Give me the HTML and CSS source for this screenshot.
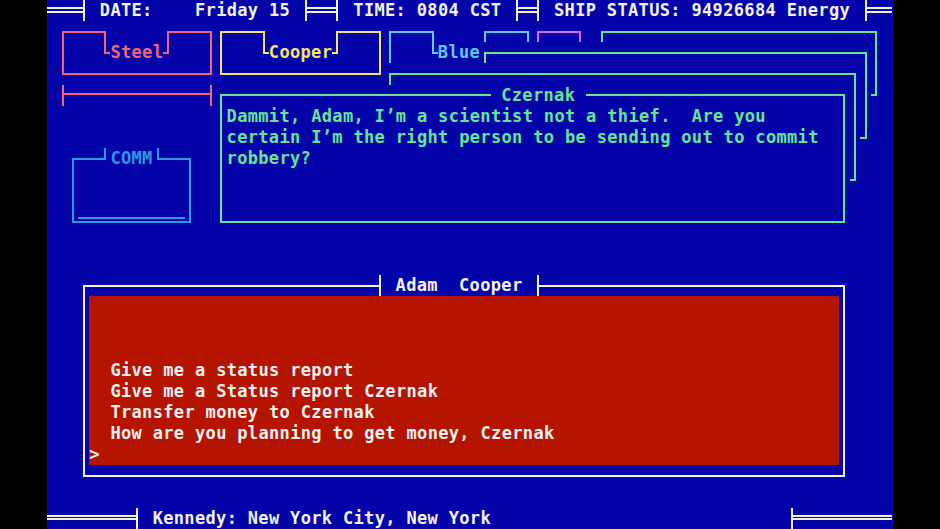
FILE: index.html
```html
<!DOCTYPE html>
<html lang="en">
<head>
<meta charset="utf-8">
<title>Ship Terminal</title>
<link rel="stylesheet" href="styles.css">
</head>
<body>
<main class="screen">
  <!-- header row -->
  <div class="dbl dbl-r h-l"></div>
  <div class="txt h-date">DATE:    Friday 15</div>
  <div class="dbl dbl-both h-s1"></div>
  <div class="txt h-time">TIME: 0804 CST</div>
  <div class="dbl dbl-both h-s2"></div>
  <div class="txt h-ship">SHIP STATUS: 94926684 Energy</div>
  <div class="dbl dbl-l h-r"></div>

  <!-- character tabs -->
  <div class="box magenta mag-box"></div>
  <div class="box tab magenta mag-tab"></div>

  <div class="box pink steel-box"></div>
  <div class="box tab pink steel-tab"></div>
  <div class="label pink steel-label">Steel</div>

  <div class="box yellow cooper-box"></div>
  <div class="box tab yellow cooper-tab"></div>
  <div class="label yellow cooper-label">Cooper</div>

  <div class="box cyan blue-box"></div>
  <div class="box tab cyan blue-tab"></div>
  <div class="label cyan blue-label">Blue</div>

  <!-- stacked dialogue windows -->
  <div class="win green g1"><div class="frame"></div></div>
  <div class="win green g2"><div class="frame"></div></div>
  <div class="win green g3"><div class="frame"></div></div>
  <div class="win green g4"><div class="frame"></div></div>
  <div class="wtitle green czt"> Czernak </div>
  <div class="dialog green">Dammit, Adam, I’m a scientist not a thief.  Are you
certain I’m the right person to be sending out to commit
robbery?</div>

  <div class="tee pink"></div>

  <div class="box comm comm-box"></div>
  <div class="comm comm-title">COMM</div>

  <!-- player window -->
  <div class="box white adam-box"></div>
  <div class="adam-title">Adam  Cooper</div>
  <div class="panel">
    <div class="opt">Give me a status report</div>
    <div class="opt">Give me a Status report Czernak</div>
    <div class="opt">Transfer money to Czernak</div>
    <div class="opt">How are you planning to get money, Czernak</div>
    <div class="prompt">&gt;</div>
  </div>

  <!-- footer row -->
  <div class="dbl dbl-r f-l"></div>
  <div class="txt f-text">Kennedy: New York City, New York</div>
  <div class="dbl dbl-l f-r"></div>
</main>
</body>
</html>
```

FILE: styles.css
```css
:root {
  --c: 10.575px;
  --r: 21.16px;
  --blue: #0404a8;
  --red: #b41400;
  --white: #f2f2f2;
  --pink: #ee6677;
  --yellow: #f2e46c;
  --cyan: #5ccaff;
  --magenta: #d070f0;
  --green: #66e694;
  --comm: #2c98e0;
}

* { box-sizing: border-box; }

html, body { margin: 0; height: 100%; }

body {
  background: #000;
  display: flex;
  justify-content: center;
  align-items: flex-start;
}

.screen {
  display: grid;
  grid-template-columns: repeat(80, var(--c));
  grid-template-rows: repeat(25, var(--r));
  width: 846px;
  height: 529px;
  background: var(--blue);
  font-family: "DejaVu Sans Mono", monospace;
  font-weight: bold;
  font-size: 17px;
  letter-spacing: 0.34px;
  line-height: var(--r);
  color: var(--white);
  overflow: hidden;
}

/* colours */
.pink { color: var(--pink); }
.yellow { color: var(--yellow); }
.cyan { color: var(--cyan); }
.magenta { color: var(--magenta); }
.green { color: var(--green); }
.comm { color: var(--comm); }
.white { color: var(--white); }

.txt, .label, .wtitle, .dialog { white-space: pre; }

/* double-line header/footer pieces */
.dbl {
  color: var(--white);
  background:
    linear-gradient(currentColor, currentColor) 0 7px / 100% 2px no-repeat,
    linear-gradient(currentColor, currentColor) 0 10.5px / 100% 2px no-repeat;
}
.dbl-r { margin-right: calc(var(--c) / 2 - 1px); border-right: 2px solid currentColor; }
.dbl-l { margin-left: calc(var(--c) / 2 - 1px); border-left: 2px solid currentColor; }
.dbl-both {
  margin: 0 calc(var(--c) / 2 - 1px);
  border-left: 2px solid currentColor;
  border-right: 2px solid currentColor;
}

.h-l { grid-column: 1 / 5; grid-row: 1 / 2; }
.h-date { grid-column: 6 / 24; grid-row: 1 / 2; }
.h-s1 { grid-column: 25 / 29; grid-row: 1 / 2; }
.h-time { grid-column: 30 / 44; grid-row: 1 / 2; }
.h-s2 { grid-column: 45 / 48; grid-row: 1 / 2; }
.h-ship { grid-column: 49 / 77; grid-row: 1 / 2; }
.h-r { grid-column: 78 / 81; grid-row: 1 / 2; }

.f-l { grid-column: 1 / 10; grid-row: 25 / 26; }
.f-text { grid-column: 11 / 43; grid-row: 25 / 26; }
.f-r { grid-column: 71 / 81; grid-row: 25 / 26; }

/* single-line boxes whose border runs through cell centres */
.box {
  margin: calc(var(--r) / 2 - 1px) calc(var(--c) / 2 - 1px);
  border: 2px solid currentColor;
}
.tab { border-top: 0; background: var(--blue); }
.label { background: var(--blue); }

.steel-box { grid-column: 2 / 17; grid-row: 2 / 5; }
.steel-tab { grid-column: 6 / 13; grid-row: 2 / 4; }
.steel-label { grid-column: 7 / 12; grid-row: 3 / 4; }

.cooper-box { grid-column: 17 / 33; grid-row: 2 / 5; }
.cooper-tab { grid-column: 21 / 29; grid-row: 2 / 4; }
.cooper-label { grid-column: 22 / 28; grid-row: 3 / 4; }

.blue-box { grid-column: 33 / 47; grid-row: 2 / 5; }
.blue-tab { grid-column: 37 / 43; grid-row: 2 / 4; }
.blue-label { grid-column: 38 / 42; grid-row: 3 / 4; }

.mag-box { grid-column: 47 / 62; grid-row: 2 / 5; }
.mag-tab { grid-column: 51 / 58; grid-row: 2 / 4; }

/* stacked windows: blue fill over whole cells, frame at cell centres */
.win { background: var(--blue); display: flex; }
.frame {
  flex: 1;
  margin: calc(var(--r) / 2 - 1px) calc(var(--c) / 2 - 1px);
  border: 2px solid currentColor;
}
.g1 { grid-column: 53 / 80; grid-row: 2 / 6; }
.g2 { grid-column: 42 / 79; grid-row: 3 / 8; }
.g3 { grid-column: 33 / 78; grid-row: 4 / 10; }
.g4 { grid-column: 17 / 77; grid-row: 5 / 12; }

.wtitle { background: var(--blue); }
.czt { grid-column: 43 / 52; grid-row: 5 / 6; }

.dialog { grid-column: 18 / 76; grid-row: 6 / 9; }

.tee {
  grid-column: 2 / 17;
  grid-row: 5 / 6;
  margin: 0 calc(var(--c) / 2 - 1px);
  border-left: 2px solid currentColor;
  border-right: 2px solid currentColor;
  background: linear-gradient(currentColor, currentColor) 0 45% / 100% 2px no-repeat;
}

.comm-box {
  grid-column: 3 / 15;
  grid-row: 8 / 12;
  background: linear-gradient(currentColor, currentColor) center bottom 2px / calc(100% - 8px) 2px no-repeat;
}
.comm-title {
  grid-column: 6 / 12;
  grid-row: 8 / 9;
  align-self: start;
  height: calc(var(--r) / 2 + 1px);
  margin: 0 calc(var(--c) / 2 - 1px);
  padding-left: calc(var(--c) / 2 - 1px);
  border-left: 2px solid currentColor;
  border-right: 2px solid currentColor;
  background: var(--blue);
  white-space: pre;
}

.adam-box { grid-column: 4 / 77; grid-row: 14 / 24; }
.adam-title {
  grid-column: 32 / 48;
  grid-row: 14 / 15;
  margin: 0 calc(var(--c) / 2 - 1px);
  padding-left: calc(var(--c) * 1.5 - 1px);
  border-left: 2px solid var(--white);
  border-right: 2px solid var(--white);
  background: var(--blue);
  white-space: pre;
}

.panel {
  grid-column: 5 / 76;
  grid-row: 15 / 23;
  background: var(--red);
  padding-top: calc(var(--r) * 3);
}
.opt, .prompt { white-space: pre; height: var(--r); }
.opt { padding-left: calc(var(--c) * 2); }
```
